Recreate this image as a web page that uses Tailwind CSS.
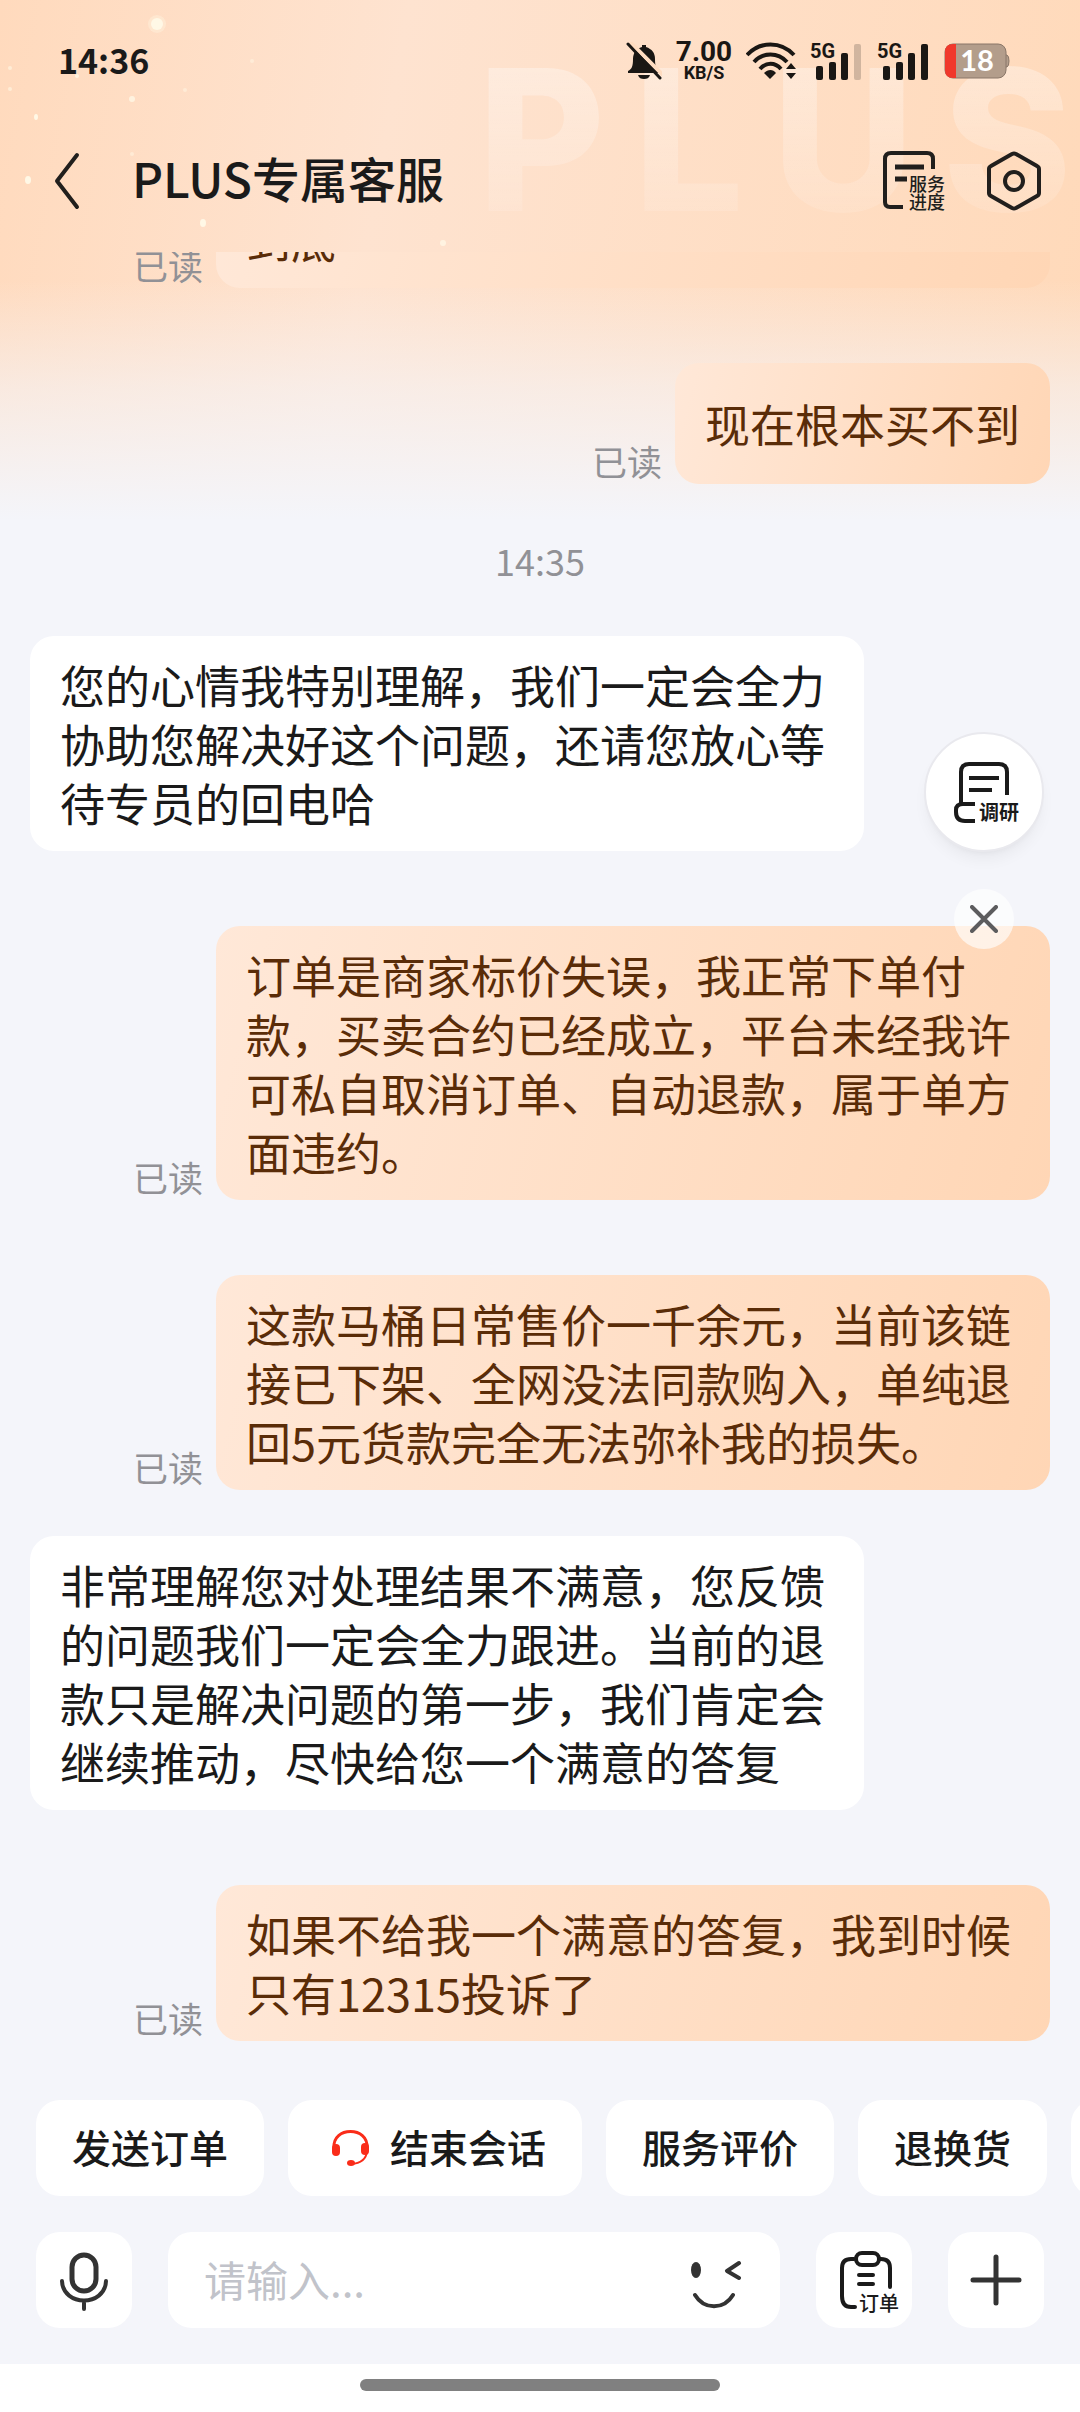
<!DOCTYPE html>
<html lang="zh-CN">

<head>
    <meta charset="UTF-8">
    <meta name="viewport" content="width=device-width, initial-scale=1.0">
    <script src="https://cdn.jsdelivr.net/npm/@tailwindcss/browser@4"></script>
    <title>PLUS专属客服</title>
</head>

<body class="font-['Noto_Sans_CJK_SC',sans-serif] bg-[#f4f5fa] text-[#1a1a1a]">
<div class="relative isolate flex h-screen flex-col overflow-hidden">

    <!-- 顶部渐变背景 -->
    <div class="absolute inset-x-0 top-0 -z-10 h-[520px] overflow-hidden bg-linear-100 from-[#ffdabd] via-[#fee3d0] via-35% to-[#ffd9b9]" aria-hidden="true">
        <div class="absolute right-[8px] top-[20px] flex gap-7 bg-linear-to-b from-white/40 to-white/5 bg-clip-text font-['Inter',sans-serif] text-[196px] leading-[240px] font-extrabold text-transparent">
            <span>P</span><span>L</span><span>U</span><span>S</span>
        </div>
        <svg class="absolute left-0 top-0" width="480" height="270" fill="#fff8e6">
            <circle cx="157" cy="24" r="9" opacity=".35"/>
            <circle cx="157" cy="24" r="6"/>
            <circle cx="132" cy="99" r="3" opacity=".8"/>
            <circle cx="77" cy="76" r="2" opacity=".8"/>
            <ellipse cx="36" cy="117" rx="2" ry="3"/>
            <ellipse cx="28" cy="180" rx="3" ry="4"/>
            <ellipse cx="203" cy="223" rx="3" ry="4"/>
            <circle cx="443" cy="243" r="3" opacity=".8"/>
            <circle cx="185" cy="90" r="2" opacity=".5"/>
            <circle cx="10" cy="68" r="2" opacity=".6"/>
            <circle cx="10" cy="89" r="2" opacity=".6"/>
            <circle cx="252" cy="61" r="2" opacity=".5"/>
            <circle cx="132" cy="154" r="2" opacity=".5"/>
        </svg>
        <div class="absolute inset-x-0 bottom-0 h-[240px] bg-linear-to-b from-[#f4f5fa]/0 via-[#f4f5fa]/55 via-45% to-[#f4f5fa]"></div>
    </div>

    <!-- 状态栏 -->
    <div class="flex h-[110px] shrink-0 items-center justify-between pt-3 pr-[70px] pl-[58px]">
        <span class="pb-1 text-[34px] font-bold">14:36</span>
        <div class="flex items-center gap-[14px]">
            <svg width="36" height="38" viewBox="0 0 36 38" fill="#1a1714">
                <path d="M16 3h4v2c6 2 9 6 9 12 0 7 1 10 5 12v2H2v-2c4-2 5-5 5-12C7 11 10 7 16 5z"/>
                <path d="M12 33h12c-1 3-3 4-6 4s-5-1-6-4z"/>
                <path d="M4 0L38 34" stroke="#ffdcc0" stroke-width="4"/>
                <path d="M2 2L34 36" stroke="#1a1714" stroke-width="3" stroke-linecap="round"/>
            </svg>
            <div class="flex w-[56px] flex-col items-center font-['Roboto',sans-serif] font-bold text-[#1a1714]">
                <span class="text-[28px] leading-[24px]">7.00</span>
                <span class="text-[18px] leading-[18px]">KB/S</span>
            </div>
            <svg width="50" height="38" viewBox="0 0 50 38" fill="none" stroke="#1a1714" stroke-width="4">
                <path d="M1 13C14-1 35-1 48 13M8 20c9-10 24-10 33 0M14 27c6-7 15-7 21 0"/>
                <path d="M18 31c4-4 9-4 12 0l-6 6z" fill="#1a1714" stroke="none"/>
                <path d="M40 27l5-6 5 6zM40 31l5 6 5-6z" fill="#1a1714" stroke="none"/>
            </svg>
            <svg width="53" height="38" viewBox="0 0 53 38" fill="#1a1714">
                <text x="0" y="16" font-size="20" font-weight="700" font-family="Roboto, sans-serif">5G</text>
                <rect x="6" y="24" width="7" height="14" rx="2"/>
                <rect x="19" y="20" width="7" height="18" rx="2"/>
                <rect x="31" y="11" width="7" height="27" rx="2"/>
                <rect x="44" y="2" width="7" height="36" rx="2" opacity=".2"/>
            </svg>
            <svg width="53" height="38" viewBox="0 0 53 38" fill="#1a1714">
                <text x="0" y="16" font-size="20" font-weight="700" font-family="Roboto, sans-serif">5G</text>
                <rect x="6" y="24" width="7" height="14" rx="2"/>
                <rect x="19" y="20" width="7" height="18" rx="2"/>
                <rect x="31" y="11" width="7" height="27" rx="2"/>
                <rect x="44" y="2" width="7" height="36" rx="2"/>
            </svg>
            <svg width="66" height="36" viewBox="0 0 66 36">
                <path d="M61 12h2q2 1 2 6t-2 6h-2z" fill="#b39d8b" stroke="#8a7768"/>
                <rect x="1" y="1" width="61" height="34" rx="8" fill="#b39d8b" stroke="#8a7768"/>
                <path d="M12 1H9q-8 0-8 8v18q0 8 8 8h3z" fill="#f0382b"/>
                <text x="33" y="28" font-size="29" font-weight="700" font-family="Lato, sans-serif" fill="#fff" text-anchor="middle">18</text>
            </svg>
        </div>
    </div>

    <!-- 标题栏 -->
    <header class="flex h-[142px] shrink-0 items-center pr-[36px] pl-[50px]">
        <button type="button" aria-label="返回">
            <svg width="34" height="60" viewBox="0 0 34 60" fill="none" stroke="#211f1d" stroke-width="4" stroke-linecap="round" stroke-linejoin="round">
                <path d="M27 4L7 30l20 26"/>
            </svg>
        </button>
        <h1 class="ml-12 flex-1 pb-2 text-[48px] font-medium leading-[60px]">PLUS专属客服</h1>
        <button type="button" aria-label="服务进度" class="mr-[39px]">
            <svg width="64" height="62" viewBox="0 0 64 62" fill="none" stroke="#211f1d" stroke-width="4">
                <path d="M52 19V9q0-6-6-6H10Q4 3 4 9v43q0 5 5 5h13"/>
                <path d="M14 17h29M14 29h12" stroke-width="5"/>
                <g fill="#211f1d" stroke="none" font-size="18" font-weight="500">
                    <text x="28" y="41">服务</text>
                    <text x="28" y="59">进度</text>
                </g>
            </svg>
        </button>
        <button type="button" aria-label="设置">
            <svg width="60" height="60" viewBox="0 0 60 60" fill="none" stroke="#211f1d" stroke-width="4" stroke-linejoin="round">
                <path d="M28 3q2-1 4 0l21 12q2 1 2 3v24q0 2-2 3L32 57q-2 1-4 0L7 45q-2-1-2-3V18q0-2 2-3z"/>
                <circle cx="30" cy="30" r="9"/>
            </svg>
        </button>
    </header>

    <!-- 消息列表 -->
    <main class="flex min-h-0 flex-1 flex-col justify-end overflow-hidden px-[30px] pb-[59px] text-[45px] leading-[59px]">
        <div class="flex shrink-0 items-end justify-end gap-[13px]">
            <span class="shrink-0 text-[35px] leading-[46px] text-[#919196]">已读</span>
            <p class="w-full max-w-[834px] rounded-[24px] bg-linear-105 from-[#ffe8d8] to-[#ffd6b5] px-[30px] py-[19px] text-[#5a2c08]">到底</p>
        </div>
        <div class="mt-[75px] flex shrink-0 items-end justify-end gap-[13px]">
            <span class="shrink-0 text-[35px] leading-[46px] text-[#919196]">已读</span>
            <p class="max-w-[834px] rounded-[24px] bg-linear-105 from-[#ffe8d8] to-[#ffd6b5] px-[30px] py-[31px] text-[#5a2c08]">现在根本买不到</p>
        </div>
        <time class="my-[49px] shrink-0 text-center text-[36px] leading-[54px] text-[#919196]">14:35</time>
        <p class="max-w-[834px] shrink-0 rounded-[24px] bg-white px-[30px] py-[19px]">您的心情我特别理解，我们一定会全力协助您解决好这个问题，还请您放心等待专员的回电哈</p>
        <div class="mt-[75px] flex shrink-0 items-end justify-end gap-[13px]">
            <span class="shrink-0 text-[35px] leading-[46px] text-[#919196]">已读</span>
            <p class="max-w-[834px] rounded-[24px] bg-linear-105 from-[#ffe8d8] to-[#ffd6b5] px-[30px] py-[19px] text-[#5a2c08]">订单是商家标价失误，我正常下单付款，买卖合约已经成立，平台未经我许可私自取消订单、自动退款，属于单方面违约。</p>
        </div>
        <div class="mt-[75px] flex shrink-0 items-end justify-end gap-[13px]">
            <span class="shrink-0 text-[35px] leading-[46px] text-[#919196]">已读</span>
            <p class="max-w-[834px] rounded-[24px] bg-linear-105 from-[#ffe8d8] to-[#ffd6b5] px-[30px] py-[19px] text-[#5a2c08]">这款马桶日常售价一千余元，当前该链接已下架、全网没法同款购入，单纯退回5元货款完全无法弥补我的损失。</p>
        </div>
        <p class="mt-[46px] max-w-[834px] shrink-0 rounded-[24px] bg-white px-[30px] py-[19px]">非常理解您对处理结果不满意，您反馈的问题我们一定会全力跟进。当前的退款只是解决问题的第一步，我们肯定会继续推动，尽快给您一个满意的答复</p>
        <div class="mt-[75px] flex shrink-0 items-end justify-end gap-[13px]">
            <span class="shrink-0 text-[35px] leading-[46px] text-[#919196]">已读</span>
            <p class="max-w-[834px] rounded-[24px] bg-linear-105 from-[#ffe8d8] to-[#ffd6b5] px-[30px] py-[19px] text-[#5a2c08]">如果不给我一个满意的答复，我到时候只有12315投诉了</p>
        </div>
    </main>

    <!-- 调研悬浮按钮 -->
    <div class="absolute top-[732px] right-[36px] flex flex-col items-center gap-[37px]">
        <button type="button" aria-label="调研" class="flex size-[120px] items-center justify-center rounded-full border-2 border-[#e9e9ee] bg-white shadow-lg shadow-black/5">
            <svg width="72" height="64" viewBox="0 0 72 64" fill="none" stroke="#1a1a1a" stroke-width="4">
                <path d="M13 44V12q0-8 8-8h30q8 0 8 8v23"/>
                <path d="M27 44H15q-7 0-7 6v2q0 9 9 9h10"/>
                <path d="M21 18h30M21 30h23"/>
                <text x="31" y="60" font-size="20" font-weight="700" fill="#1a1a1a" stroke="none">调研</text>
            </svg>
        </button>
        <button type="button" aria-label="关闭" class="flex size-[60px] items-center justify-center rounded-full bg-white/65">
            <svg width="28" height="28" viewBox="0 0 28 28" stroke="#5c5c5e" stroke-width="4" stroke-linecap="round">
                <path d="M2 2l24 24M26 2L2 26"/>
            </svg>
        </button>
    </div>

    <!-- 快捷操作 -->
    <nav class="flex shrink-0 gap-6 overflow-hidden pl-[36px] text-[39px] font-medium leading-[59px]">
        <button type="button" class="h-24 shrink-0 rounded-[24px] bg-white px-[36px] pb-1">发送订单</button>
        <button type="button" class="flex h-24 shrink-0 items-center gap-3 rounded-[24px] bg-white px-[36px]">
            <svg width="54" height="54" viewBox="0 0 54 54" fill="none" stroke="#fa2c19">
                <path d="M10 27C8 5 45 5 43 27" stroke-width="3"/>
                <path d="M43 30q-1 12-16 13" stroke-width="2"/>
                <g fill="#fa2c19" stroke="none">
                    <rect x="8" y="23" width="8" height="12" rx="4"/>
                    <rect x="37" y="22" width="8" height="12" rx="4"/>
                    <ellipse cx="27" cy="42" rx="4" ry="3"/>
                </g>
            </svg>
            <span class="pb-1">结束会话</span>
        </button>
        <button type="button" class="h-24 shrink-0 rounded-[24px] bg-white px-[36px] pb-1">服务评价</button>
        <button type="button" class="h-24 shrink-0 rounded-[24px] bg-white px-[36px] pb-1">退换货</button>
        <button type="button" aria-label="更多服务" class="h-24 w-[228px] shrink-0 rounded-[24px] bg-white"></button>
    </nav>

    <!-- 输入区 -->
    <div class="flex shrink-0 items-center gap-[36px] p-[36px]">
        <button type="button" aria-label="语音" class="flex size-24 shrink-0 items-center justify-center rounded-[24px] bg-white">
            <svg width="52" height="64" viewBox="0 0 52 64" fill="none" stroke="#333" stroke-width="5" stroke-linecap="round">
                <rect x="14" y="7" width="24" height="36" rx="12"/>
                <path d="M4 33c1 26 43 26 44 0M26 53v8" stroke-width="4"/>
            </svg>
        </button>
        <div class="flex h-24 min-w-0 flex-1 items-center rounded-[24px] bg-white pr-[34px] pl-[36px]">
            <label for="message" class="sr-only">消息</label>
            <input type="text" id="message" placeholder="请输入..." class="min-w-0 flex-1 pb-1 text-[42px] outline-none placeholder:text-[#c1c3ca]">
            <button type="button" aria-label="表情">
                <svg width="60" height="60" viewBox="0 0 60 60" fill="none" stroke="#333" stroke-width="4" stroke-linecap="round" stroke-linejoin="round">
                    <ellipse cx="10" cy="20" rx="5" ry="8" fill="#333" stroke="none"/>
                    <path d="M53 13l-12 8 12 7M9 45c9 15 29 15 38 0"/>
                </svg>
            </button>
        </div>
        <button type="button" aria-label="订单" class="flex size-24 shrink-0 items-center justify-center rounded-[24px] bg-white">
            <svg width="72" height="66" viewBox="0 0 72 66" fill="none" stroke="#1a1a1a" stroke-width="4" stroke-linecap="round">
                <path d="M26 12h-3q-9 0-9 9v28q0 11 9 11h4M52 12h1q9 0 9 9v19"/>
                <rect x="28" y="6" width="23" height="12" rx="6"/>
                <path d="M31 28h14M31 37h14"/>
                <text x="31" y="64" font-size="20" font-weight="500" fill="#1a1a1a" stroke="none">订单</text>
            </svg>
        </button>
        <button type="button" aria-label="更多" class="flex size-24 shrink-0 items-center justify-center rounded-[24px] bg-white">
            <svg width="52" height="52" viewBox="0 0 52 52" stroke="#333" stroke-width="5" stroke-linecap="round">
                <path d="M26 3v46M3 26h46"/>
            </svg>
        </button>
    </div>

    <!-- 底部手势条 -->
    <div class="flex h-12 shrink-0 justify-center bg-white pt-[15px]">
        <div class="h-3 w-1/3 rounded-full bg-[#808080]"></div>
    </div>
</div>
</body>

</html>
